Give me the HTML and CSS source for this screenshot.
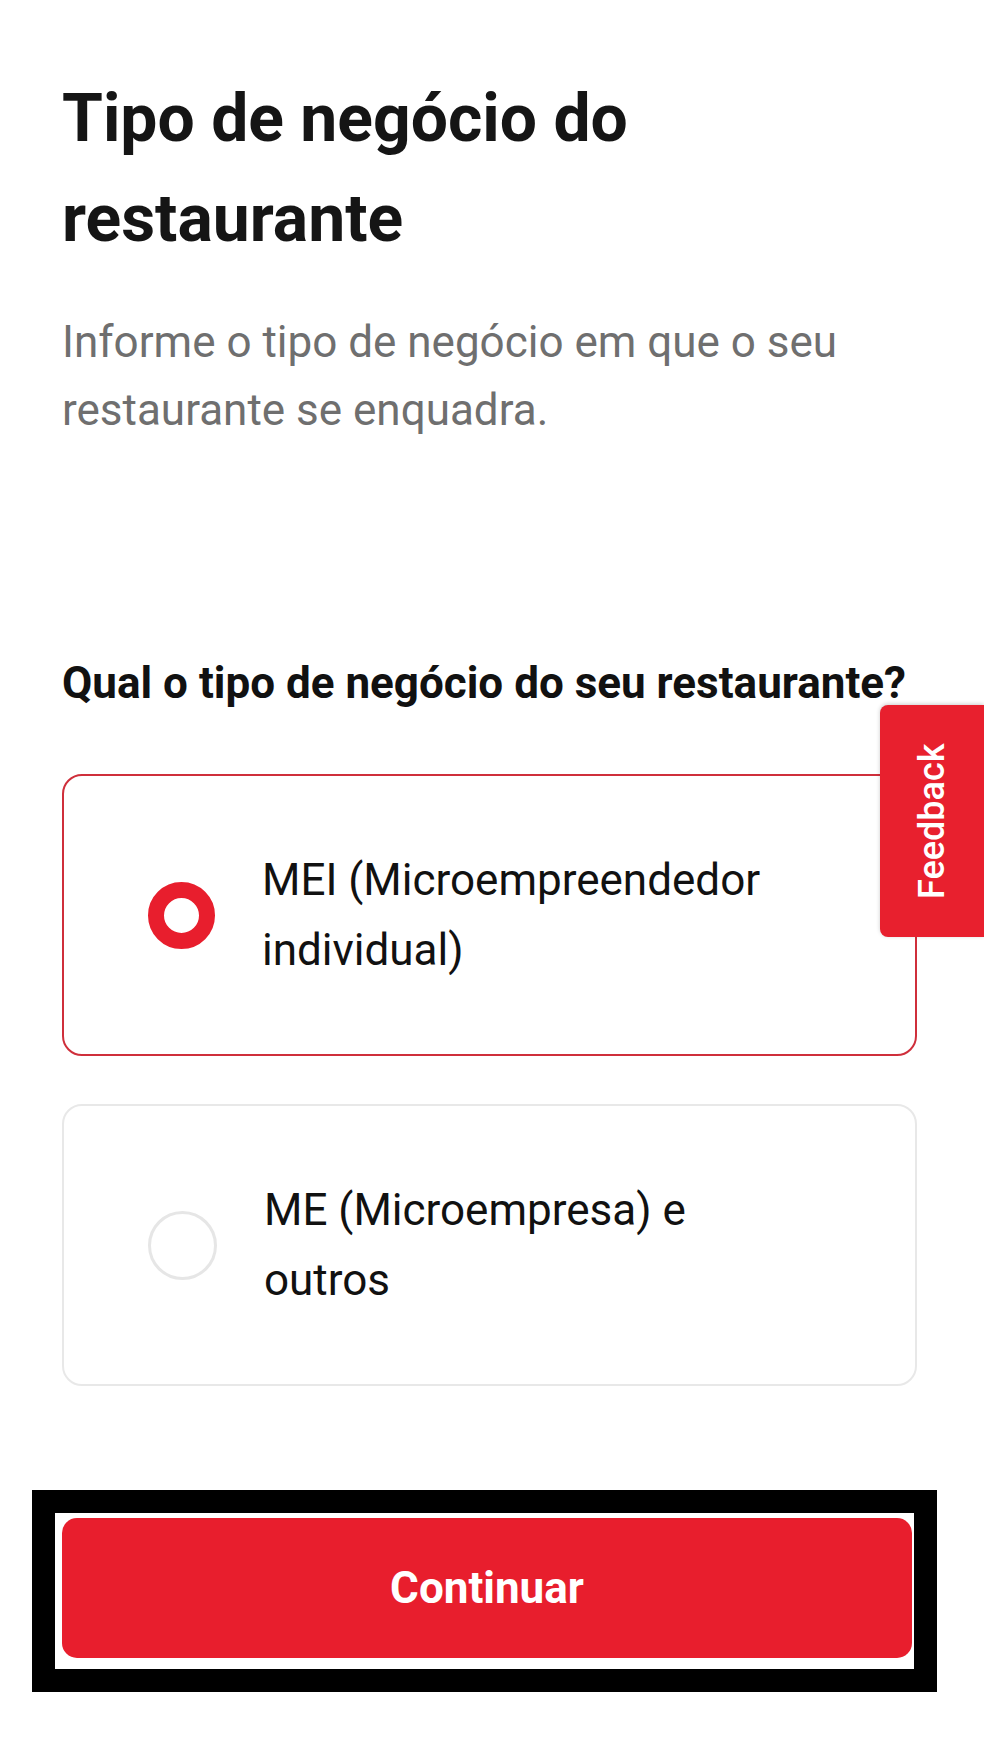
FILE: index.html
```html
<!DOCTYPE html>
<html lang="pt-BR">
  <head>
    <meta charset="UTF-8" />
    <meta name="viewport" content="width=device-width, initial-scale=1.0" />
    <title>Tipo de negócio do restaurante</title>
    <link rel="stylesheet" href="styles.css">
  </head>
  <body>
    <main class="page">
      <h1 class="title">Tipo de negócio do restaurante</h1>
      <p class="subtitle">
        Informe o tipo de negócio em que o seu restaurante se enquadra.
      </p>

      <form class="business-form">
        <h2 class="question">Qual o tipo de negócio do seu restaurante?</h2>

        <div class="options">
          <label class="option option-selected">
            <input type="radio" name="businessType" value="mei" checked />
            <span class="radio"></span>
            <span class="option-text">MEI (Microempreendedor individual)</span>
          </label>

          <label class="option">
            <input type="radio" name="businessType" value="me" />
            <span class="radio"></span>
            <span class="option-text">ME (Microempresa) e outros</span>
          </label>
        </div>

        <div class="highlight">
          <button type="button" class="btn-continue">Continuar</button>
        </div>
      </form>
    </main>

    <button type="button" class="feedback-tab">Feedback</button>
  </body>
</html>
```

FILE: styles.css
```css
* {
  box-sizing: border-box;
}

body {
  margin: 0;
  background-color: #fff;
  color: #151515;
  font-family: Roboto, "Noto Sans", Arial, sans-serif;
}

.page {
  width: 984px;
  padding: 69px 67px 0 62px;
}

.title {
  margin: 0;
  font-size: 66px;
  font-weight: 700;
  line-height: 100px;
  width: 620px;
}

.subtitle {
  margin: 39px 0 0;
  font-size: 44px;
  line-height: 68px;
  color: #6f6f6f;
  width: 800px;
}

.business-form {
  margin-top: 209px;
}

.question {
  margin: 0;
  font-size: 44px;
  font-weight: 700;
  line-height: 60px;
  color: #111;
  white-space: nowrap;
}

.options {
  display: flex;
  flex-direction: column;
  gap: 48px;
  margin-top: 61px;
}

.option {
  display: flex;
  align-items: center;
  gap: 47px;
  height: 282px;
  padding: 0 40px 0 84px;
  border: 2px solid #e8e8e8;
  border-radius: 20px;
  cursor: pointer;
}

.option input {
  display: none;
}

.option-selected {
  border-color: #cf2f3b;
}

.radio {
  flex: none;
  width: 69px;
  height: 69px;
  border: 3px solid #e6e6e6;
  border-radius: 50%;
}

.option-selected .radio {
  width: 67px;
  height: 67px;
  border: 16px solid #e81e2d;
}

.option-text {
  font-size: 44px;
  line-height: 70px;
  color: #111;
  width: 520px;
}

.highlight {
  margin: 104px -20px 0 -30px;
  padding: 5px 2px 11px 7px;
  border: 23px solid #000;
  background-color: #fff;
}

.btn-continue {
  display: block;
  width: 100%;
  height: 140px;
  border: none;
  border-radius: 15px;
  background-color: #e81e2d;
  color: #fff;
  font-family: inherit;
  font-size: 44px;
  font-weight: 700;
  cursor: pointer;
}

/* side tab, sits over the page */
.feedback-tab {
  position: absolute;
  top: 705px;
  right: 0;
  width: 104px;
  height: 232px;
  padding: 0;
  border: none;
  border-radius: 0 8px 8px 0;
  background-color: #e8202e;
  box-shadow: 0 1px 4px rgba(0, 0, 0, 0.2);
  color: #fff;
  font-family: inherit;
  font-size: 36px;
  font-weight: 500;
  writing-mode: vertical-rl;
  transform: rotate(180deg);
  text-align: center;
}
```
